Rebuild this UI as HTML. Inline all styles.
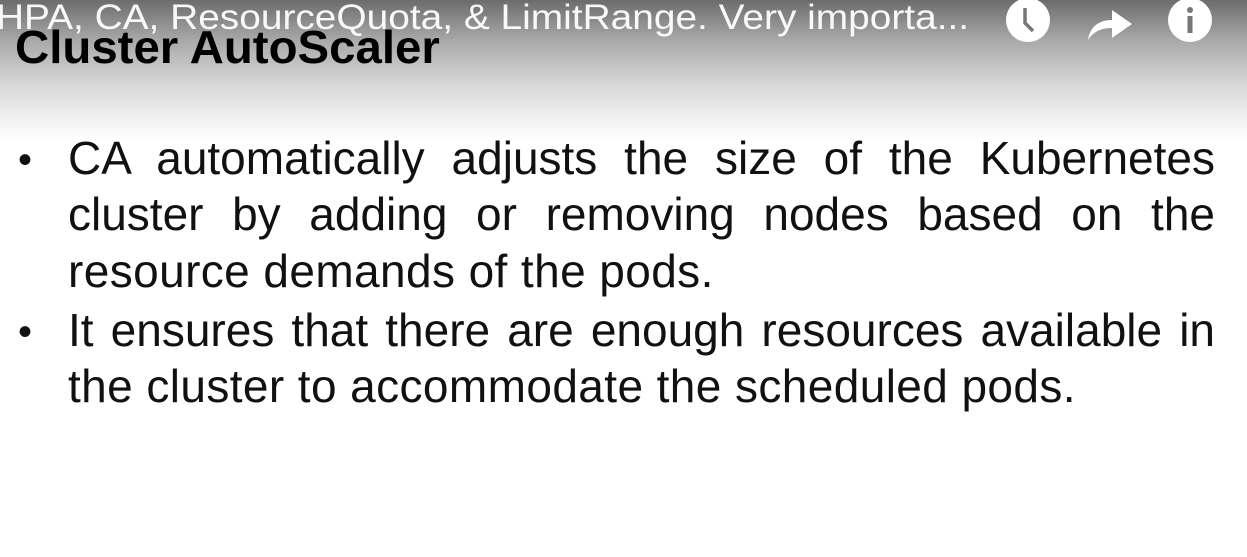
<!DOCTYPE html>
<html><head><meta charset="utf-8"><style>
html,body{margin:0;padding:0;width:1247px;height:557px;overflow:hidden;background:#fff;font-family:"Liberation Sans",sans-serif;}
.bg{position:absolute;left:0;top:0;width:1247px;height:140px;background:linear-gradient(#6c6c6c 0px,#a8a8a8 40px,#d8d8d8 85px,#eeeeee 115px,#fff 140px);}
.t{position:absolute;left:15px;top:20px;font-size:46px;font-weight:bold;color:#000;transform-origin:0 0;transform:scaleX(1.03);}
.ov{position:absolute;left:-4px;top:-2px;font-size:35px;color:#fff;white-space:nowrap;transform-origin:0 0;transform:scaleX(1.11);opacity:0.95}
.l{position:absolute;left:68px;width:1147px;font-size:46px;letter-spacing:0.4px;color:#111;white-space:nowrap;}
.j{text-align:justify;text-align-last:justify;white-space:normal;letter-spacing:0;}
.b{position:absolute;left:18px;font-size:40px;color:#111;}
</style></head><body>
<div class="bg"></div>
<div class="t">Cluster AutoScaler</div>
<div class="ov">HPA, CA, ResourceQuota, &amp; LimitRange. Very importa...</div>
<svg style="position:absolute;left:0;top:0" width="1247" height="60">
<circle cx="1028" cy="20" r="22" fill="#fff"/>
<path d="M1025 8 V23 L1033 31" stroke="#777" stroke-width="3.5" fill="none"/>
<path d="M1088 40 C1090 26 1100 20 1112 20 V10 L1132 24 L1112 38 V28 C1102 28 1094 31 1088 40 Z" fill="#fff"/>
<circle cx="1190" cy="20" r="22" fill="#fff"/>
<circle cx="1190" cy="10" r="3" fill="#777"/>
<rect x="1187.5" y="16" width="5" height="17" fill="#777"/>
</svg>
<div class="b" style="top:138px">•</div>
<div class="l j" style="top:131px">CA automatically adjusts the size of the Kubernetes</div>
<div class="l j" style="top:187px">cluster by adding or removing nodes based on the</div>
<div class="l" style="top:244px">resource demands of the pods.</div>
<div class="b" style="top:310px">•</div>
<div class="l j" style="top:303px">It ensures that there are enough resources available in</div>
<div class="l" style="top:359px">the cluster to accommodate the scheduled pods.</div>
</body></html>
